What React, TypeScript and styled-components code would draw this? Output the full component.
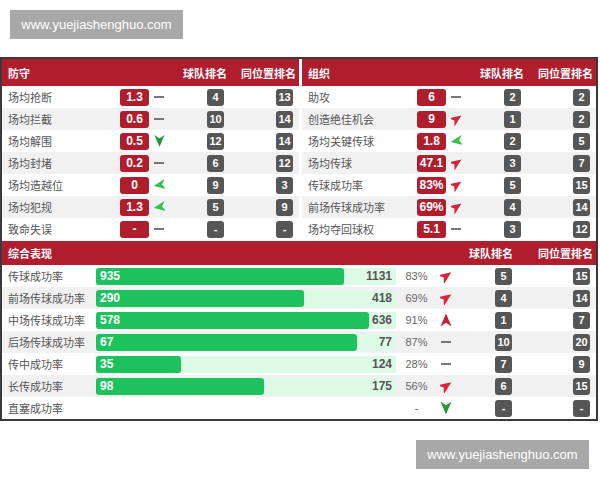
import React from "react";
import styled, { createGlobalStyle } from "styled-components";

const Global = createGlobalStyle`
  html, body { margin: 0; padding: 0; background: #fff; }
  body { font-family: "Liberation Sans", "Noto Sans CJK SC", sans-serif; }
`;

const RED = "#b01e2e";

const Page = styled.div`
  padding-top: 10px;
  width: 600px;
`;

const Watermark = styled.div<{ $right?: boolean }>`
  width: 173px;
  height: 29px;
  margin-left: ${(p) => (p.$right ? 416 : 10)}px;
  margin-top: ${(p) => (p.$right ? 19 : 0)}px;
  background: #a8a8a8;
  color: #fff;
  font: 13px "Liberation Sans", sans-serif;
  display: flex;
  align-items: center;
  justify-content: center;
`;

const Frame = styled.div`
  width: 594px;
  margin-top: 18px;
  border: 2px solid #3a3a3a;
  background: #fff;
`;

const TopRow = styled.div`
  display: flex;
  gap: 3px;
`;

const Panel = styled.div<{ $w: number }>`
  width: ${(p) => p.$w}px;
`;

const HeaderBar = styled.div<{ $h: number }>`
  display: flex;
  align-items: center;
  height: ${(p) => p.$h}px;
  padding: 0 3px 0 6px;
  background: ${RED};
  color: #fff;
  font-size: 11px;
  font-weight: bold;
  white-space: nowrap;
`;

const HeadTitle = styled.div`
  flex: 1;
`;

const HeadCell = styled.div<{ $w: number; $pr?: number }>`
  width: ${(p) => p.$w}px;
  padding-right: ${(p) => p.$pr ?? 0}px;
  box-sizing: border-box;
  text-align: right;
`;

const Row = styled.div<{ $alt: boolean }>`
  display: flex;
  align-items: center;
  height: 22px;
  padding: 0 3px 0 6px;
  background: ${(p) => (p.$alt ? "#f1f1f1" : "#fff")};
`;

const Label = styled.div<{ $w?: number }>`
  ${(p) => (p.$w ? `width: ${p.$w}px;` : "flex: 1;")}
  font-size: 11px;
  color: #555;
  white-space: nowrap;
`;

const ValueBadge = styled.div`
  width: 29px;
  height: 17px;
  border-radius: 3px;
  background: ${RED};
  color: #fff;
  font-size: 12px;
  font-weight: bold;
  display: flex;
  align-items: center;
  justify-content: center;
`;

const TrendCell = styled.div<{ $w: number; $center?: boolean }>`
  width: ${(p) => p.$w}px;
  box-sizing: border-box;
  padding-left: ${(p) => (p.$center ? 0 : 5)}px;
  display: flex;
  align-items: center;
  justify-content: ${(p) => (p.$center ? "center" : "flex-start")};
`;

const RankCell = styled.div<{ $w: number }>`
  width: ${(p) => p.$w}px;
  padding-right: 3px;
  box-sizing: border-box;
  display: flex;
  justify-content: flex-end;
`;

const RankBadge = styled.div`
  min-width: 17px;
  height: 17px;
  padding: 0 2px;
  box-sizing: border-box;
  border-radius: 3px;
  background: #565656;
  color: #fff;
  font-size: 11px;
  font-weight: bold;
  display: flex;
  align-items: center;
  justify-content: center;
`;

const Dash = styled.span`
  display: block;
  width: 10px;
  height: 2px;
  background: #777;
`;

const Bottom = styled.div`
  margin-top: 1px;
`;

const Track = styled.div<{ $empty?: boolean }>`
  width: 300px;
  height: 17px;
  display: flex;
  align-items: center;
  background: ${(p) => (p.$empty ? "transparent" : "#dcfae6")};
`;

const Bar = styled.div`
  flex-shrink: 0;
  height: 17px;
  border-radius: 3px;
  background: #1dc25c;
  color: #fff;
  font-size: 12px;
  font-weight: bold;
  padding-left: 4px;
  box-sizing: border-box;
  display: flex;
  align-items: center;
`;

const Total = styled.div`
  margin-left: auto;
  padding-right: 4px;
  font-size: 12px;
  font-weight: bold;
  color: #555;
`;

const Pct = styled.div`
  width: 41px;
  text-align: center;
  font-size: 11px;
  color: #666;
`;

type Trend = "flat" | "upRight" | "left" | "down" | "up";

const TrendIcon: React.FC<{ t: Trend }> = ({ t }) => {
  if (t === "flat") return <Dash />;
  const cfg: Record<string, { r: number; c: string }> = {
    upRight: { r: 55, c: "#d9253b" },
    left: { r: -100, c: "#35c048" },
    down: { r: 180, c: "#23963a" },
    up: { r: 0, c: "#c81f33" },
  };
  const { r, c } = cfg[t];
  return (
    <svg width="12" height="14" viewBox="0 0 12 14">
      <path d="M6 0.5 L11.5 13.5 L6 9.8 L0.5 13.5 Z" fill={c} transform={`rotate(${r} 6 7)`} />
    </svg>
  );
};

type StatRow = [string, string, Trend, string, string];

const defense: StatRow[] = [
  ["场均抢断", "1.3", "flat", "4", "13"],
  ["场均拦截", "0.6", "flat", "10", "14"],
  ["场均解围", "0.5", "down", "12", "14"],
  ["场均封堵", "0.2", "flat", "6", "12"],
  ["场均造越位", "0", "left", "9", "3"],
  ["场均犯规", "1.3", "left", "5", "9"],
  ["致命失误", "-", "flat", "-", "-"],
];

const organize: StatRow[] = [
  ["助攻", "6", "flat", "2", "2"],
  ["创造绝佳机会", "9", "upRight", "1", "2"],
  ["场均关键传球", "1.8", "left", "2", "5"],
  ["场均传球", "47.1", "upRight", "3", "7"],
  ["传球成功率", "83%", "upRight", "5", "15"],
  ["前场传球成功率", "69%", "upRight", "4", "14"],
  ["场均夺回球权", "5.1", "flat", "3", "12"],
];

type BarRow = [string, number | null, number | null, string, Trend, string, string];

const overall: BarRow[] = [
  ["传球成功率", 935, 1131, "83%", "upRight", "5", "15"],
  ["前场传球成功率", 290, 418, "69%", "upRight", "4", "14"],
  ["中场传球成功率", 578, 636, "91%", "up", "1", "7"],
  ["后场传球成功率", 67, 77, "87%", "flat", "10", "20"],
  ["传中成功率", 35, 124, "28%", "flat", "7", "9"],
  ["长传成功率", 98, 175, "56%", "upRight", "6", "15"],
  ["直塞成功率", null, null, "-", "down", "-", "-"],
];

const StatPanel: React.FC<{ title: string; w: number; rows: StatRow[] }> = ({ title, w, rows }) => (
  <Panel $w={w}>
    <HeaderBar $h={27}>
      <HeadTitle>{title}</HeadTitle>
      <HeadCell $w={62}>球队排名</HeadCell>
      <HeadCell $w={69}>同位置排名</HeadCell>
    </HeaderBar>
    {rows.map(([label, val, trend, team, pos], i) => (
      <Row key={label} $alt={i % 2 === 1}>
        <Label>{label}</Label>
        <ValueBadge>{val}</ValueBadge>
        <TrendCell $w={16}>
          <TrendIcon t={trend} />
        </TrendCell>
        <RankCell $w={62}>
          <RankBadge>{team}</RankBadge>
        </RankCell>
        <RankCell $w={69}>
          <RankBadge>{pos}</RankBadge>
        </RankCell>
      </Row>
    ))}
  </Panel>
);

export default function App() {
  return (
    <Page>
      <Global />
      <Watermark>www.yuejiashenghuo.com</Watermark>
      <Frame>
        <TopRow>
          <StatPanel title="防守" w={297} rows={defense} />
          <StatPanel title="组织" w={294} rows={organize} />
        </TopRow>
        <Bottom>
          <HeaderBar $h={24}>
            <HeadTitle>综合表现</HeadTitle>
            <HeadCell $w={60} $pr={2}>球队排名</HeadCell>
            <HeadCell $w={78}>同位置排名</HeadCell>
          </HeaderBar>
          {overall.map(([label, v, total, pct, trend, team, pos], i) => (
            <Row key={label} $alt={i % 2 === 1}>
              <Label $w={88}>{label}</Label>
              {v !== null && total !== null ? (
                <Track>
                  <Bar style={{ width: `${(v / total) * 100}%` }}>{v}</Bar>
                  <Total>{total}</Total>
                </Track>
              ) : (
                <Track $empty />
              )}
              <Pct>{pct}</Pct>
              <TrendCell $w={18} $center>
                <TrendIcon t={trend} />
              </TrendCell>
              <RankCell $w={60}>
                <RankBadge>{team}</RankBadge>
              </RankCell>
              <RankCell $w={78}>
                <RankBadge>{pos}</RankBadge>
              </RankCell>
            </Row>
          ))}
        </Bottom>
      </Frame>
      <Watermark $right>www.yuejiashenghuo.com</Watermark>
    </Page>
  );
}
